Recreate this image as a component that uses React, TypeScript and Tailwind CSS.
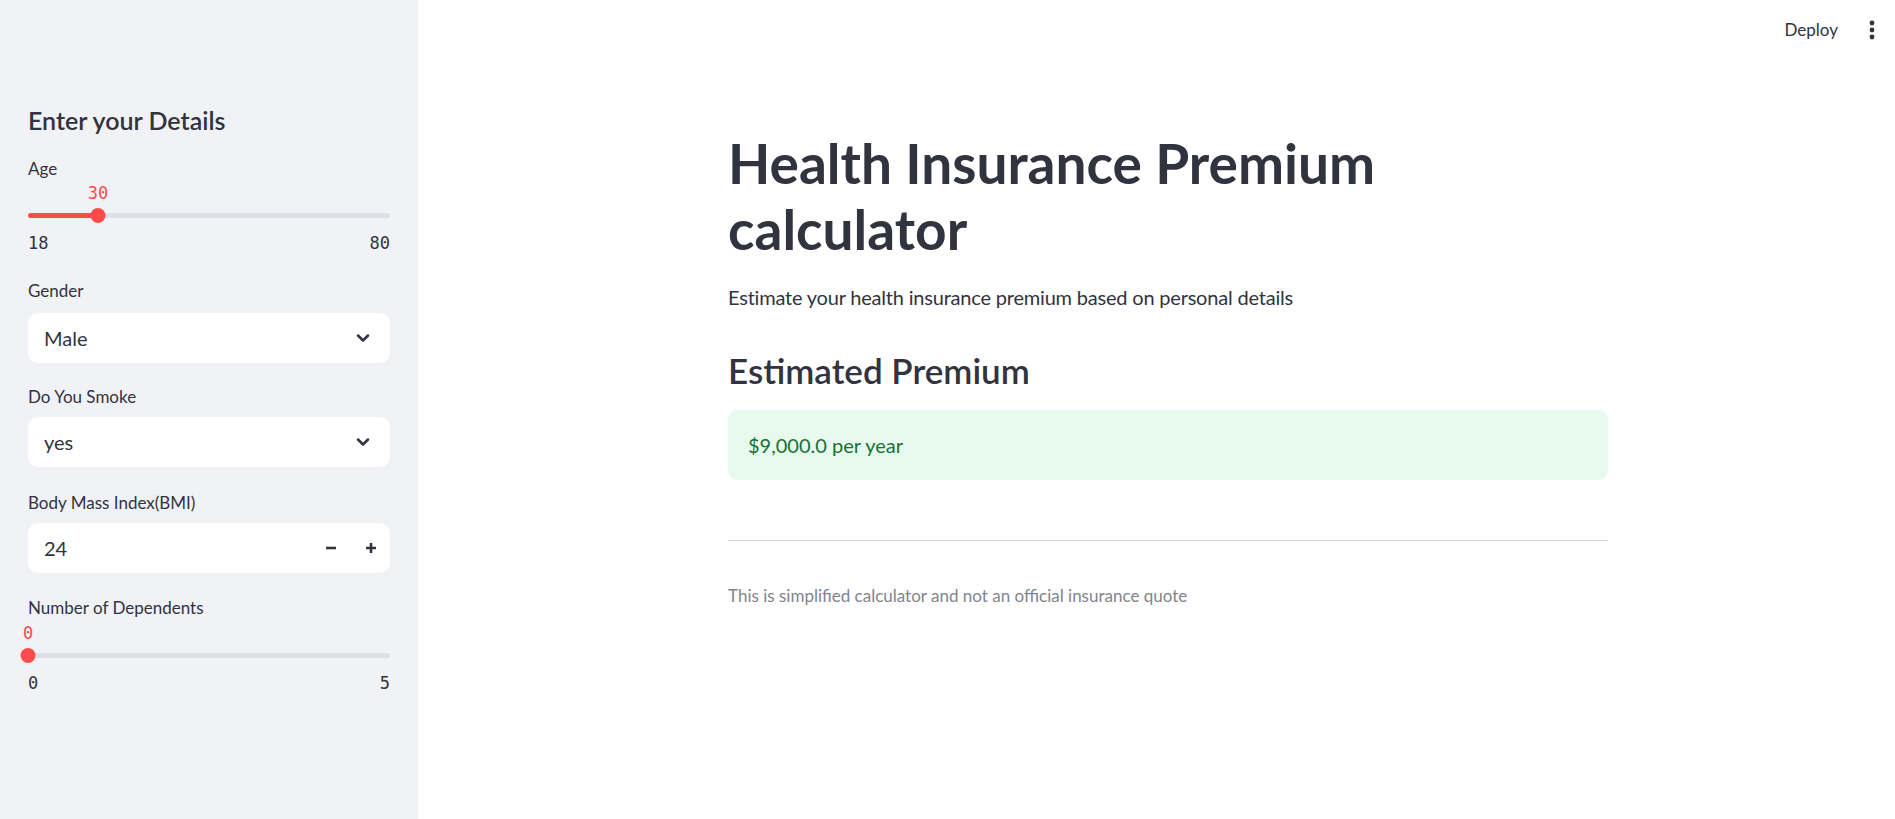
import React from 'react';

const sans = "font-['Lato','Noto_Sans',sans-serif]";
const mono = "font-['DejaVu_Sans_Mono','Liberation_Mono',monospace]";

const Chevron: React.FC = () => (
  <svg width="20" height="20" viewBox="0 0 24 24" fill="none" stroke="#31333f" strokeWidth="3" strokeLinecap="round" strokeLinejoin="round">
    <path d="M6 9l6 6 6-6" />
  </svg>
);

type SliderProps = { min: number; max: number; value: number };

const Slider: React.FC<SliderProps> = ({ min, max, value }) => {
  const pct = ((value - min) / (max - min)) * 100;
  return (
    <div className="flex flex-col">
      <div className="relative h-[20px]">
        <span
          className={`${mono} absolute top-0 -translate-x-1/2 text-[17px] leading-[20px] text-[#ff4b4b]`}
          style={{ left: `${pct}%` }}
        >
          {value}
        </span>
      </div>
      <div className="relative mt-[4px] flex h-[16px] items-center">
        <div className="h-[5px] w-full rounded-full bg-[#dde0e7]" />
        <div className="absolute left-0 h-[5px] rounded-full bg-[#ff4b4b]" style={{ width: `${pct}%` }} />
        <div
          className="absolute h-[15px] w-[15px] -translate-x-1/2 rounded-full bg-[#ff4b4b]"
          style={{ left: `${pct}%` }}
        />
      </div>
      <div className={`${mono} mt-[10px] flex h-[20px] justify-between text-[17px] leading-[20px] text-[#31333f]`}>
        <span>{min}</span>
        <span>{max}</span>
      </div>
    </div>
  );
};

const Label: React.FC<{ text: string; className?: string }> = ({ text, className }) => (
  <div className={`h-[22px] text-[17px] leading-[22px] text-[#31333f] ${className ?? ''}`}>{text}</div>
);

const SelectBox: React.FC<{ value: string; className?: string }> = ({ value, className }) => (
  <div className={`flex h-[50px] items-center justify-between rounded-[10px] bg-white pl-[16px] pr-[17px] ${className ?? ''}`}>
    <span className="text-[20px] text-[#31333f]">{value}</span>
    <Chevron />
  </div>
);

export default function App() {
  return (
    <div className={`${sans} flex h-[819px] w-full overflow-hidden bg-white text-[#31333f]`}>
      <aside className="flex w-[418px] shrink-0 flex-col bg-[#f0f2f6] px-[28px] pt-[105px]">
        <h2 className="h-[30px] text-[25px] font-semibold leading-[30px]">Enter your Details</h2>

        <Label text="Age" className="mt-[23px]" />
        <div className="mt-[3px]">
          <Slider min={18} max={80} value={30} />
        </div>

        <Label text="Gender" className="mt-[27px]" />
        <SelectBox value="Male" className="mt-[11px]" />

        <Label text="Do You Smoke" className="mt-[23px]" />
        <SelectBox value="yes" className="mt-[9px]" />

        <Label text="Body Mass Index(BMI)" className="mt-[25px]" />
        <div className="mt-[9px] flex h-[50px] items-center rounded-[10px] bg-white pl-[16px] pr-[12px]">
          <span className="flex-1 text-[20px]">24</span>
          <div className="flex items-center gap-[26px]">
            <svg width="14" height="14" viewBox="0 0 14 14">
              <path d="M2 7h10" stroke="#31333f" strokeWidth="2.6" />
            </svg>
            <svg width="14" height="14" viewBox="0 0 14 14">
              <path d="M2 7h10M7 2v10" stroke="#31333f" strokeWidth="2.6" />
            </svg>
          </div>
        </div>

        <Label text="Number of Dependents" className="mt-[24px]" />
        <div className="mt-[4px]">
          <Slider min={0} max={5} value={0} />
        </div>
      </aside>

      <main className="flex flex-1 flex-col">
        <header className="flex h-[60px] items-center justify-end gap-[31px] pr-[20px]">
          <span className="text-[17px] text-[#31333f]">Deploy</span>
          <svg width="6" height="20" viewBox="0 0 6 20" fill="#31333f">
            <circle cx="3" cy="3" r="2.4" />
            <circle cx="3" cy="10" r="2.4" />
            <circle cx="3" cy="17" r="2.4" />
          </svg>
        </header>

        <div className="flex justify-center pl-[23px] pt-[70px]">
          <div className="flex w-[880px] flex-col">
            <h1 className="text-[55px] font-bold leading-[66px] text-[#31333f]">
              Health Insurance Premium calculator
            </h1>
            <p className="mt-[20px] text-[20px] leading-[30px] tracking-[-0.2px]">
              Estimate your health insurance premium based on personal details
            </p>
            <h3 className="mt-[37px] text-[35px] font-semibold leading-[42px]">Estimated Premium</h3>
            <div className="mt-[19px] flex h-[70px] items-center rounded-[10px] bg-[#e8f9ee] px-[20px] text-[20px] text-[#177233]">
              $9,000.0 per year
            </div>
            <hr className="mt-[60px] border-t border-[#d6d6d9]" />
            <p className="mt-[43px] text-[17px] leading-[24px] text-[#83848c]">
              This is simplified calculator and not an official insurance quote
            </p>
          </div>
        </div>
      </main>
    </div>
  );
}
